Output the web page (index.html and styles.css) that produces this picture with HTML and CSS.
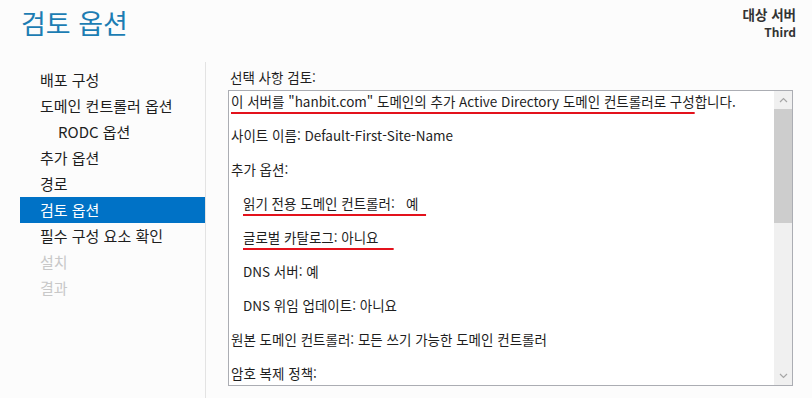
FILE: index.html
```html
<!DOCTYPE html>
<html lang="ko">
<head>
  <meta charset="UTF-8" />
  <meta name="viewport" content="width=device-width, initial-scale=1.0"/>
  <title>검토 옵션</title>
  <link rel="stylesheet" href="styles.css">
</head>
<body>

  <div class="wizard">
    <!-- 머리글 -->
    <header class="head">
      <h1 class="title">검토 옵션</h1>
      <div class="target">
        <div class="target-label">대상 서버</div>
        <div>Third</div>
      </div>
    </header>

    <div class="main">
      <!-- 단계 목록 -->
      <nav class="steps">
        <div class="step">배포 구성</div>
        <div class="step">도메인 컨트롤러 옵션</div>
        <div class="step sub">RODC 옵션</div>
        <div class="step">추가 옵션</div>
        <div class="step">경로</div>
        <div class="step active">검토 옵션</div>
        <div class="step">필수 구성 요소 확인</div>
        <div class="step disabled">설치</div>
        <div class="step disabled">결과</div>
      </nav>

      <!-- 검토 내용 -->
      <section class="pane">
        <div class="label">선택 사항 검토:</div>
        <div class="review">
          <div class="review-text">
            <p><span class="mark">이 서버를 "hanbit.com" 도메인의 추가 Active Directory 도메인 컨트롤러로 구성</span>합니다.</p>
            <p>사이트 이름: Default-First-Site-Name</p>
            <p>추가 옵션:</p>
            <p class="indent"><span class="mark">읽기 전용 도메인 컨트롤러:&nbsp;&nbsp; 예&nbsp;&nbsp;</span></p>
            <p class="indent"><span class="mark">글로벌 카탈로그: 아니요&nbsp;&nbsp;&nbsp;&nbsp;</span></p>
            <p class="indent">DNS 서버: 예</p>
            <p class="indent">DNS 위임 업데이트: 아니요</p>
            <p>원본 도메인 컨트롤러: 모든 쓰기 가능한 도메인 컨트롤러</p>
            <p>암호 복제 정책:</p>
          </div>
          <div class="scrollbar">
            <div class="arrow">
              <svg width="9" height="6" viewBox="0 0 9 6"><path d="M1 5 L4.5 1.5 L8 5" fill="none" stroke="#a6a6a6" stroke-width="1.2"/></svg>
            </div>
            <div class="track"><div class="thumb"></div></div>
            <div class="arrow">
              <svg width="9" height="6" viewBox="0 0 9 6"><path d="M1 1 L4.5 4.5 L8 1" fill="none" stroke="#a6a6a6" stroke-width="1.2"/></svg>
            </div>
          </div>
        </div>
      </section>
    </div>
  </div>

</body>
</html>
```

FILE: styles.css
```css
body {
  margin: 0;
  background: #fcfcfc;
  font-family: 'Noto Sans CJK KR', 'Noto Sans', sans-serif;
  color: #1e1e1e;
  overflow: hidden;
}

.wizard {
  width: 812px;
  height: 398px;
  display: flex;
  flex-direction: column;
}

.head {
  height: 62px;
  display: flex;
  justify-content: space-between;
  align-items: flex-start;
  padding: 0 16px 0 21px;
}

.title {
  margin: 5px 0 0;
  font-size: 27px;
  font-weight: 400;
  line-height: 36px;
  color: #1c7db3;
}

.target {
  margin-top: 5px;
  text-align: right;
  font-size: 12px;
  font-weight: 700;
  line-height: 18px;
  color: #333;
}

.target-label {
  font-size: 13.5px;
}

.main {
  flex: 1;
  display: flex;
  min-height: 0;
}

.steps {
  width: 185px;
  margin-left: 20px;
  padding-top: 5px;
  border-right: 1px solid #e3e3e3;
}

.step {
  height: 26px;
  line-height: 26px;
  padding-left: 20px;
  font-size: 15px;
  color: #1e1e1e;
}

.step.sub {
  padding-left: 38px;
}

.step.active {
  background: #0072c6;
  color: #fff;
}

.step.disabled {
  color: #c8c8c8;
}

.pane {
  flex: 1;
  display: flex;
  flex-direction: column;
  padding: 6px 19px 12px 22px;
}

.label {
  font-size: 13.5px;
  line-height: 18px;
  margin-bottom: 4px;
  padding-left: 2px;
}

.review {
  flex: 1;
  display: flex;
  border: 1px solid #abadb3;
  background: #fff;
  min-height: 0;
}

.review-text {
  flex: 1;
  overflow: hidden;
  padding: 2px 0 0 2px;
  font-size: 13.5px;
  line-height: 17px;
}

.review-text p {
  margin: 0 0 17px;
  white-space: nowrap;
}

.review-text .indent {
  padding-left: 12px;
}

.mark {
  text-decoration: underline;
  text-decoration-color: #e3121c;
  text-decoration-thickness: 2px;
  text-underline-offset: 5px;
  text-decoration-skip-ink: none;
}

.scrollbar {
  width: 18px;
  display: flex;
  flex-direction: column;
  background: #f0f0f0;
}

.arrow {
  height: 18px;
  display: flex;
  align-items: center;
  justify-content: center;
}

.track {
  flex: 1;
}

.thumb {
  height: 114px;
  background: #cdcdcd;
}
```
